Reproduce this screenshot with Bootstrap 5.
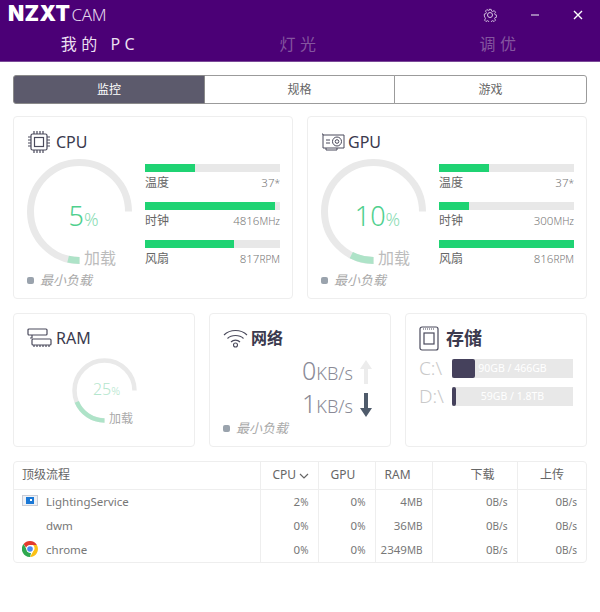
<!DOCTYPE html>
<html lang="zh">
<head>
<meta charset="UTF-8">
<title>NZXT CAM</title>
<link href="https://cdn.jsdelivr.net/npm/bootstrap@5.3.0/dist/css/bootstrap.min.css" rel="stylesheet">
<style>
  html, body { height: 612px; overflow: hidden; }
  body { font-family: "Noto Sans", "Noto Sans CJK SC", sans-serif; background: #fff; color: #777; font-size: 12px; }

  /* title bar */
  .cam-head { height: 62px; background: #4b0076; border-bottom: 1px solid #7a4a98; color: #fff; }
  .cam-top { height: 29px; padding: 0 17px 0 8px; }
  .cam-logo { font-family: Inter, "Liberation Sans", sans-serif; font-weight: 900; font-size: 21px; line-height: 1; letter-spacing: .4px; }
  .cam-logo-sub { font-family: "Noto Sans", sans-serif; font-weight: 300; font-size: 17px; color: #e4d8ec; margin-left: 1px; letter-spacing: -.3px; }
  .cam-win { gap: 33px; }
  .cam-tabs { height: 32px; }
  .cam-tab { width: 200px; text-align: center; font-size: 16px; letter-spacing: 4.500px; color: #84559f; line-height: 31px; }
  .cam-tab-on { color: #eadff0; }

  /* segmented control */
  .cam-seg { margin: 13px 13px 12px; height: 29px; }
  .cam-seg .btn { font-size: 12px; padding: 0; line-height: 27px; color: #666; border-color: #9b9b9b; background: #fff; border-radius: 3px; }
  .cam-seg .btn.active { background: #5c5a6c; color: #fff; border-color: #8a8a8a; }
  .cam-seg .seg-a { flex: 0 0 192px; }
  .cam-seg .seg-b { flex: 0 0 191px; }
  .cam-seg .seg-c { flex: 0 0 193px; }

  /* panels */
  .cam-row { display: flex; padding: 0 13px; }
  .cam-row-big { gap: 14px; margin-bottom: 14px; }
  .cam-row-small { gap: 14px; margin-bottom: 14px; }
  .cam-panel { border: 1px solid #eeeeee; border-radius: 4px; box-shadow: none; position: relative; }
  .panel-big { width: 280px; height: 183px; padding: 14px 12px 0 13px; }
  .panel-small { width: 182px; height: 134px; padding: 13px 12px 0 13px; }
  .panel-title { height: 22px; font-size: 16px; color: #3b3a4e; gap: 5px; line-height: 22px; }
  .panel-title-tight { gap: 3px; }
  .panel-title-ram { gap: 4px; }
  .panel-title-cjk { font-weight: 700; }
  .panel-title-disk { font-size: 18px; gap: 7px; }
  .gauge-row { height: 105px; margin-top: 6px; }
  .gauge-wrap { position: relative; width: 118px; height: 105px; flex: none; }
  .gauge-val { position: absolute; left: 0; width: 113px; top: 41px; text-align: center; font-size: 27px; line-height: 32px; font-weight: 300; color: #4fd08e; }
  .gauge-val small { font-size: 18px; color: #8bdcb4; }
  .gauge-lbl { position: absolute; left: 57px; top: 88px; font-size: 16px; line-height: 22px; color: #bcbcbc; }
  .stat-col { flex: 1; padding-top: 5px; }
  .stat-item { height: 38px; }
  .cam-bar { height: 8px; background: #e8e8e8; border-radius: 0; }
  .cam-bar .progress-bar { background: #1fd373; }
  .stat-line { font-size: 12px; line-height: 22px; color: #666; }
  .stat-val { color: #777; font-size: 11.500px; font-weight: 300; }
  .stat-val span, .cam-unit { font-size: 10px; }
  .legend-line { font-style: italic; color: #aaa; font-size: 13px; gap: 6px; line-height: 16px; margin-top: 8px; }
  .legend-dot { width: 7px; height: 7px; border-radius: 2px; background: #9aa3ad; }
  .legend-net { margin-top: -1px; }

  /* ram */
  .ram-wrap { position: relative; height: 75px; margin: 9px 0 0 45px; width: 100px; }
  .ram-val { position: absolute; left: 0; width: 69px; top: 20px; text-align: center; font-size: 16px; line-height: 22px; font-weight: 300; color: #b4e6cd; }
  .ram-val small { font-size: 11px; }
  .ram-lbl { position: absolute; left: 37px; top: 52px; color: #aaa; font-size: 12px; line-height: 18px; }

  /* network */
  .net-line { height: 33px; font-weight: 300; color: #8a8a96; font-size: 18px; line-height: 33px; gap: 7px; padding-right: 6px; }
  .net-num { font-size: 25px; }
  .net-lines { margin-top: 6px; }

  /* storage */
  .disk-lines { margin-top: 5px; }
  .disk-line { height: 28px; gap: 10px; }
  .disk-name { width: 23px; font-size: 19px; font-weight: 300; color: #c9c9c9; line-height: 20px; }
  .disk-bar { position: relative; width: 121px; height: 19px; background: #e8e8e8; border-radius: 0; }
  .disk-bar .progress-bar { background: #45415c; border-radius: 2px; }
  .disk-txt { position: absolute; inset: 0; text-align: center; color: #fff; font-size: 10.500px; line-height: 19px; }

  /* process table */
  .cam-table-wrap { margin: 0 13px; border: 1px solid #eeeeee; border-radius: 4px; height: 102px; }
  .cam-table { table-layout: fixed; width: 100%; margin: 0; border-collapse: collapse; --bs-table-color: #777; color: #777; }
  .cam-table th, .cam-table td { border: 0; border-left: 1px solid #eeeeee; padding: 0 9px 0 0; font-weight: 400; font-size: 11.500px; text-align: right; white-space: nowrap; vertical-align: middle; }
  .cam-table th { height: 27px; border-bottom: 1px solid #eeeeee; color: #666; font-size: 12px; padding: 0 0 0 12px; text-align: left; }
  .cam-table td { height: 24.300px; line-height: 24px; }
  .cam-table th:first-child, .cam-table td:first-child { border-left: 0; text-align: left; padding-left: 8px; }
  .cam-table th.cell-r { text-align: right; padding-right: 22px; }
  .cam-table th.cell-ram { padding-left: 9px; }
  .c-name { width: 246px; }
  .c-cpu { width: 58px; }
  .c-gpu, .c-ram { width: 57px; }
  .c-down { width: 85px; }
  .proc-icon { display: inline-block; width: 16px; height: 16px; margin-right: 8px; vertical-align: -3px; }
</style>
</head>
<body>

  <!-- title bar -->
  <div class="cam-head">
    <div class="cam-top d-flex align-items-center justify-content-between">
      <div class="d-flex align-items-baseline"><span class="cam-logo">NZXT</span><span class="cam-logo-sub">CAM</span></div>
      <div class="cam-win d-flex align-items-center">
        <svg width="14" height="14" viewBox="0 0 14 14" fill="none" stroke="#d9c8e4" stroke-width="1"><path d="M5.800 .8h2.400l.4 1.800 1.300.6 1.600-1 1.500 1.700-1 1.500.5 1.300 1.700.4v2.200l-1.700.4-.5 1.300 1 1.500-1.600 1.600-1.500-1-1.300.6-.4 1.800H5.800l-.4-1.800-1.300-.6-1.500 1-1.600-1.600 1-1.500-.5-1.300L.8 8.100V5.900l1.700-.4.5-1.300-1-1.500L3.600 1l1.500 1 1.300-.6z" transform="translate(.6 .6) scale(.92)"/><circle cx="7" cy="7" r="2.500"/></svg>
        <svg width="10" height="10" viewBox="0 0 10 10" stroke="#b39ac6" stroke-width="1.600"><path d="M1 5h8"/></svg>
        <svg width="10" height="10" viewBox="0 0 10 10" stroke="#fff" stroke-width="1.400"><path d="M1 1l8 8M9 1L1 9"/></svg>
      </div>
    </div>
    <div class="cam-tabs d-flex">
      <div class="cam-tab cam-tab-on">我的 PC</div>
      <div class="cam-tab">灯光</div>
      <div class="cam-tab">调优</div>
    </div>
  </div>

  <!-- monitor / specs / games -->
  <div class="cam-seg btn-group d-flex" role="group">
    <button type="button" class="btn seg-a active">监控</button>
    <button type="button" class="btn seg-b">规格</button>
    <button type="button" class="btn seg-c">游戏</button>
  </div>

  <div class="cam-row cam-row-big">
    <!-- CPU -->
    <div class="cam-panel panel-big">
      <div class="panel-title d-flex align-items-center">
        <svg width="24" height="22" viewBox="0 0 24 22" fill="none" stroke="#4a4a5c" stroke-width="1.200"><rect x="4" y="3" width="16" height="16" rx="1.500"/><rect x="7.500" y="6.500" width="9" height="9"/><path d="M7 0v3M10 0v3M13 0v3M16 0v3M7 19v3M10 19v3M13 19v3M16 19v3M1 6h3M1 9h3M1 12h3M1 15h3M20 6h3M20 9h3M20 12h3M20 15h3"/></svg>
        <span>CPU</span>
      </div>
      <div class="gauge-row d-flex">
        <div class="gauge-wrap">
          <svg width="105" height="105" viewBox="0 0 105 105" fill="none" stroke-width="7">
            <path d="M101.500 52.500A49 49 0 1 0 52.500 101.500" stroke="#e9e9e9"/>
            <path d="M52.500 101.500A49 49 0 1 1 101.500 52.500" stroke="#aee3c8" pathLength="100" stroke-dasharray="5 95"/>
          </svg>
          <div class="gauge-val">5<small>%</small></div>
          <div class="gauge-lbl">加载</div>
        </div>
        <div class="stat-col">
          <div class="stat-item">
            <div class="progress cam-bar"><div class="progress-bar" style="width:37%"></div></div>
            <div class="stat-line d-flex justify-content-between"><span>温度</span><span class="stat-val">37<span>*</span></span></div>
          </div>
          <div class="stat-item">
            <div class="progress cam-bar"><div class="progress-bar" style="width:96%"></div></div>
            <div class="stat-line d-flex justify-content-between"><span>时钟</span><span class="stat-val">4816<span>MHz</span></span></div>
          </div>
          <div class="stat-item">
            <div class="progress cam-bar"><div class="progress-bar" style="width:66%"></div></div>
            <div class="stat-line d-flex justify-content-between"><span>风扇</span><span class="stat-val">817<span>RPM</span></span></div>
          </div>
        </div>
      </div>
      <div class="legend-line d-flex align-items-center"><span class="legend-dot"></span>最小负载</div>
    </div>

    <!-- GPU -->
    <div class="cam-panel panel-big">
      <div class="panel-title panel-title-tight d-flex align-items-center">
        <svg width="24" height="18" viewBox="0 0 24 18" fill="none" stroke="#4a4a5c" stroke-width="1"><path d="M1 1h1v14h21V2H2"/><path d="M5 15v2h11v-2"/><circle cx="16" cy="8.500" r="4.500"/><circle cx="16" cy="8.500" r="1.800"/><path d="M5 7h4M5 10h4"/></svg>
        <span>GPU</span>
      </div>
      <div class="gauge-row d-flex">
        <div class="gauge-wrap">
          <svg width="105" height="105" viewBox="0 0 105 105" fill="none" stroke-width="7">
            <path d="M101.500 52.500A49 49 0 1 0 52.500 101.500" stroke="#e9e9e9"/>
            <path d="M52.500 101.500A49 49 0 1 1 101.500 52.500" stroke="#aee3c8" pathLength="100" stroke-dasharray="10 90"/>
          </svg>
          <div class="gauge-val">10<small>%</small></div>
          <div class="gauge-lbl">加载</div>
        </div>
        <div class="stat-col">
          <div class="stat-item">
            <div class="progress cam-bar"><div class="progress-bar" style="width:37%"></div></div>
            <div class="stat-line d-flex justify-content-between"><span>温度</span><span class="stat-val">37<span>*</span></span></div>
          </div>
          <div class="stat-item">
            <div class="progress cam-bar"><div class="progress-bar" style="width:22%"></div></div>
            <div class="stat-line d-flex justify-content-between"><span>时钟</span><span class="stat-val">300<span>MHz</span></span></div>
          </div>
          <div class="stat-item">
            <div class="progress cam-bar"><div class="progress-bar" style="width:100%"></div></div>
            <div class="stat-line d-flex justify-content-between"><span>风扇</span><span class="stat-val">816<span>RPM</span></span></div>
          </div>
        </div>
      </div>
      <div class="legend-line d-flex align-items-center"><span class="legend-dot"></span>最小负载</div>
    </div>
  </div>

  <div class="cam-row cam-row-small">
    <!-- RAM -->
    <div class="cam-panel panel-small">
      <div class="panel-title panel-title-ram d-flex align-items-center">
        <svg width="25" height="20" viewBox="0 0 25 20" fill="none" stroke="#4a4a5c" stroke-width="1.200"><rect x="1" y="1" width="19" height="6" rx="1"/><path d="M5 7v3h-2"/><rect x="5" y="11" width="19" height="6" rx="1"/><path d="M7 17v2M10 17v2M13 17v2M16 17v2M19 17v2M22 17v2"/></svg>
        <span>RAM</span>
      </div>
      <div class="ram-wrap">
        <svg width="65" height="65" viewBox="0 0 65 65" fill="none" stroke-width="4.500">
          <path d="M62.500 32.500A30 30 0 1 0 32.500 62.500" stroke="#e9e9e9"/>
          <path d="M32.500 62.500A30 30 0 1 1 62.500 32.500" stroke="#aee3c8" pathLength="100" stroke-dasharray="25 75"/>
        </svg>
        <div class="ram-val">25<small>%</small></div>
        <div class="ram-lbl">加载</div>
      </div>
    </div>

    <!-- network -->
    <div class="cam-panel panel-small">
      <div class="panel-title panel-title-tight d-flex align-items-center">
        <svg width="25" height="20" viewBox="0 0 25 20" fill="none" stroke="#4a4a5c" stroke-width="1.100"><path d="M1 7c6-6 17-6 23 0M4.500 10.500c4-4 12-4 16 0M8 14c2.500-2.500 6.500-2.500 9 0"/><circle cx="12.500" cy="17" r="2"/></svg>
        <span class="panel-title-cjk">网络</span>
      </div>
      <div class="net-lines">
        <div class="net-line d-flex justify-content-end align-items-center">
          <span><span class="net-num">0</span>KB/s</span>
          <svg width="12" height="24" viewBox="0 0 12 24" fill="#ececec"><path d="M6 0l6 9H8v15H4V9H0z"/></svg>
        </div>
        <div class="net-line d-flex justify-content-end align-items-center">
          <span><span class="net-num">1</span>KB/s</span>
          <svg width="12" height="24" viewBox="0 0 12 24" fill="#4f5b6b"><path d="M6 24l6-9H8V0H4v15H0z"/></svg>
        </div>
      </div>
      <div class="legend-line legend-net d-flex align-items-center"><span class="legend-dot"></span>最小负载</div>
    </div>

    <!-- storage -->
    <div class="cam-panel panel-small">
      <div class="panel-title panel-title-disk d-flex align-items-center">
        <svg width="20" height="25" viewBox="0 0 20 25" fill="none" stroke="#4a4a5c" stroke-width="1.200"><path d="M3 1h14a2 2 0 0 1 2 2v19a2 2 0 0 1-2 2H3a2 2 0 0 1-2-2V3a2 2 0 0 1 2-2z"/><rect x="5" y="7" width="10" height="11"/><path d="M4 3h12" stroke-dasharray="1 1"/></svg>
        <span class="panel-title-cjk">存储</span>
      </div>
      <div class="disk-lines">
        <div class="disk-line d-flex align-items-center">
          <span class="disk-name">C:\</span>
          <div class="progress disk-bar"><div class="progress-bar" style="width:19%"></div><div class="disk-txt">90GB / 466GB</div></div>
        </div>
        <div class="disk-line d-flex align-items-center">
          <span class="disk-name">D:\</span>
          <div class="progress disk-bar"><div class="progress-bar" style="width:3%"></div><div class="disk-txt">59GB / 1.8TB</div></div>
        </div>
      </div>
    </div>
  </div>

  <!-- top processes -->
  <div class="cam-table-wrap">
    <table class="table cam-table">
      <thead>
        <tr>
          <th class="c-name">顶级流程</th>
          <th class="c-cpu">CPU <svg width="10" height="6" viewBox="0 0 10 6" fill="none" stroke="#666" stroke-width="1.200"><path d="M1 1l4 4 4-4"/></svg></th>
          <th class="c-gpu">GPU</th>
          <th class="c-ram cell-ram">RAM</th>
          <th class="c-down cell-r">下载</th>
          <th class="cell-r">上传</th>
        </tr>
      </thead>
      <tbody>
        <tr>
          <td><svg class="proc-icon" viewBox="0 0 16 16"><rect y="2" width="16" height="11" fill="#c9ccd6"/><rect x="1" y="3" width="14" height="9" fill="#eef1f6"/><rect x="4" y="4" width="8" height="7" fill="#1a78d6"/><rect x="8" y="6" width="2" height="2" fill="#fff"/></svg>LightingService</td>
          <td>2<span class="cam-unit">%</span></td><td>0<span class="cam-unit">%</span></td><td>4<span class="cam-unit">MB</span></td><td>0<span class="cam-unit">B/s</span></td><td>0<span class="cam-unit">B/s</span></td>
        </tr>
        <tr>
          <td><span class="proc-icon"></span>dwm</td>
          <td>0<span class="cam-unit">%</span></td><td>0<span class="cam-unit">%</span></td><td>36<span class="cam-unit">MB</span></td><td>0<span class="cam-unit">B/s</span></td><td>0<span class="cam-unit">B/s</span></td>
        </tr>
        <tr>
          <td><svg class="proc-icon" viewBox="0 0 16 16"><path d="M8 0a8 8 0 0 1 6.900 4H8a4 4 0 0 0-3.800 2.800L1.600 3.100A8 8 0 0 1 8 0z" fill="#e33b2e"/><path d="M14.900 4A8 8 0 0 1 8 16l3.400-6A4 4 0 0 0 11 4z" fill="#fbc116"/><path d="M8 16A8 8 0 0 1 1.600 3.100L4.900 9A4 4 0 0 0 9 12z" fill="#2fa84f"/><circle cx="8" cy="8" r="3.600" fill="#fff"/><circle cx="8" cy="8" r="2.800" fill="#4a8af4"/></svg>chrome</td>
          <td>0<span class="cam-unit">%</span></td><td>0<span class="cam-unit">%</span></td><td>2349<span class="cam-unit">MB</span></td><td>0<span class="cam-unit">B/s</span></td><td>0<span class="cam-unit">B/s</span></td>
        </tr>
      </tbody>
    </table>
  </div>

<script src="https://cdn.jsdelivr.net/npm/bootstrap@5.3.0/dist/js/bootstrap.bundle.min.js"></script>
</body>
</html>
